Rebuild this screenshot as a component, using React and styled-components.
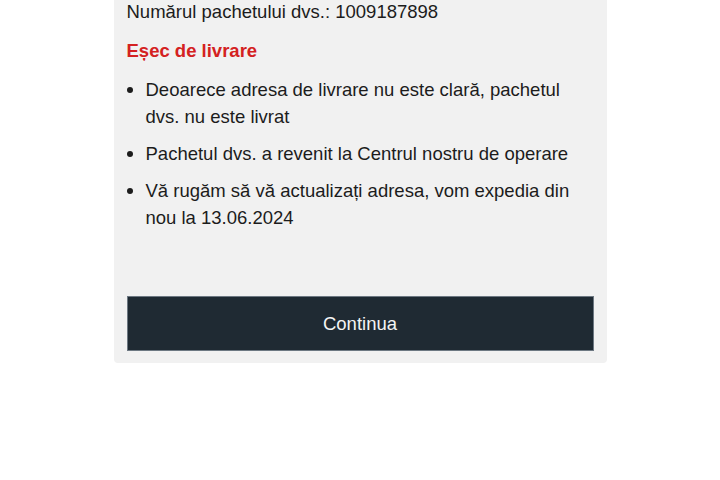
import React from 'react'
import styled, { createGlobalStyle } from 'styled-components'

const GlobalStyle = createGlobalStyle`
    body {
        margin: 0;
        background: #ffffff;
        font-family: "Liberation Sans", Arial, sans-serif;
    }
`

const reasons = [
    'Deoarece adresa de livrare nu este clară, pachetul dvs. nu este livrat',
    'Pachetul dvs. a revenit la Centrul nostru de operare',
    'Vă rugăm să vă actualizați adresa, vom expedia din nou la 13.06.2024',
]

function App() {
    return (
        <Page>
            <GlobalStyle />
            <Card>
                <TrackingNumber>Numărul pachetului dvs.: 1009187898</TrackingNumber>
                <Status>Eșec de livrare</Status>
                <Reasons>
                    {reasons.map((text) => (
                        <Reason key={text}>{text}</Reason>
                    ))}
                </Reasons>
                <ContinueButton>Continua</ContinueButton>
            </Card>
        </Page>
    )
}

export default App

const Page = styled.div`
    display: flex;
    justify-content: center;
    height: 480px;
`

const Card = styled.div`
    width: 467px;
    height: 351px;
    padding: 0 13px 12px;
    background: #f1f1f1;
    border-radius: 0 0 4px 4px;
    display: flex;
    flex-direction: column;
`

const TrackingNumber = styled.p`
    margin: 0;
    font-size: 18.5px;
    line-height: 24px;
    color: #1c1c1c;
`

const Status = styled.h2`
    margin: 15px 0 0;
    font-size: 18.5px;
    line-height: 24px;
    font-weight: bold;
    color: #d42121;
`

const Reasons = styled.ul`
    margin: 13px 0 0;
    padding: 0 0 0 19px;
    list-style: none;
`

const Reason = styled.li`
    position: relative;
    font-size: 18.5px;
    line-height: 27px;
    color: #1c1c1c;
    margin-bottom: 10px;
    padding-right: 20px;

    &:before {
        content: "";
        position: absolute;
        left: -19px;
        top: 11px;
        width: 6px;
        height: 6px;
        border-radius: 50%;
        background: #1c1c1c;
    }
`

const ContinueButton = styled.button`
    margin-top: auto;
    height: 55px;
    width: 100%;
    background: #1f2a33;
    border: 1px solid #6d7882;
    color: #f4f4f4;
    font-family: "Liberation Sans", Arial, sans-serif;
    font-size: 18.5px;
    cursor: pointer;
`
